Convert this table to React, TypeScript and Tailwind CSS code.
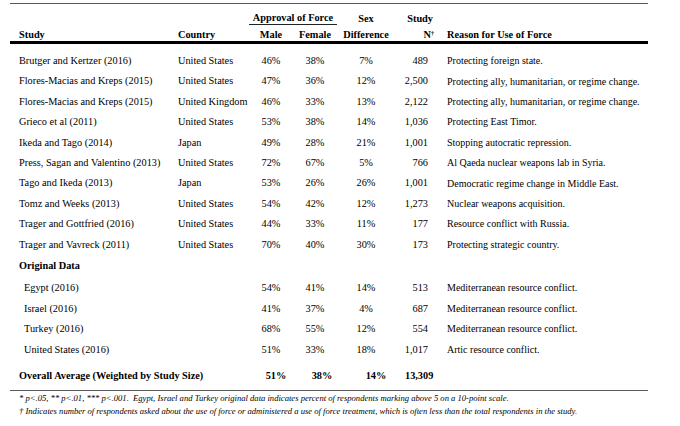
const ROWS = [
  ["Brutger and Kertzer (2016)", "United States", "46%", "38%", "7%", "489", "Protecting foreign state."],
  ["Flores-Macias and Kreps (2015)", "United States", "47%", "36%", "12%", "2,500", "Protecting ally, humanitarian, or regime change."],
  ["Flores-Macias and Kreps (2015)", "United Kingdom", "46%", "33%", "13%", "2,122", "Protecting ally, humanitarian, or regime change."],
  ["Grieco et al (2011)", "United States", "53%", "38%", "14%", "1,036", "Protecting East Timor."],
  ["Ikeda and Tago (2014)", "Japan", "49%", "28%", "21%", "1,001", "Stopping autocratic repression."],
  ["Press, Sagan and Valentino (2013)", "United States", "72%", "67%", "5%", "766", "Al Qaeda nuclear weapons lab in Syria."],
  ["Tago and Ikeda (2013)", "Japan", "53%", "26%", "26%", "1,001", "Democratic regime change in Middle East."],
  ["Tomz and Weeks (2013)", "United States", "54%", "42%", "12%", "1,273", "Nuclear weapons acquisition."],
  ["Trager and Gottfried (2016)", "United States", "44%", "33%", "11%", "177", "Resource conflict with Russia."],
  ["Trager and Vavreck (2011)", "United States", "70%", "40%", "30%", "173", "Protecting strategic country."],
];

const ORIGINAL = [
  ["Egypt (2016)", "54%", "41%", "14%", "513", "Mediterranean resource conflict."],
  ["Israel (2016)", "41%", "37%", "4%", "687", "Mediterranean resource conflict."],
  ["Turkey (2016)", "68%", "55%", "12%", "554", "Mediterranean resource conflict."],
  ["United States (2016)", "51%", "33%", "18%", "1,017", "Artic resource conflict."],
];

const GRID = "grid grid-cols-[168px_71px_44px_44px_58px_41px_212px]";

function DataRow({ cells, indent }: { cells: string[]; indent?: boolean }) {
  const [study, country, male, female, diff, n, reason] = cells;
  return (
    <div className={`${GRID} h-[20.4px] items-center leading-none`}>
      <div className={`${indent ? "pl-[14px]" : "pl-[9px]"} whitespace-nowrap`}>{study}</div>
      <div className="whitespace-nowrap">{country}</div>
      <div className="text-center">{male}</div>
      <div className="text-center">{female}</div>
      <div className="text-center">{diff}</div>
      <div className="pr-[8px] text-right">{n}</div>
      <div className="pl-[11px] text-[10px] whitespace-nowrap">{reason}</div>
    </div>
  );
}

export default function App() {
  return (
    <div className="h-[426px] w-[680px] bg-white text-black" style={{ fontFamily: "'Liberation Serif', 'Times New Roman', serif" }}>
      <div className="ml-[10px] w-[638px] pt-[3px] text-[10.3px]">
        <div className="h-px bg-[#5a5a5a]" />

        <div className={`${GRID} mt-[8px] h-[13px] items-end font-bold leading-[12px]`}>
          <div />
          <div />
          <div className="col-span-2 border-b border-[#222] text-center">Approval of Force</div>
          <div className="text-center">Sex</div>
          <div className="pr-[3px] text-right">Study</div>
          <div />
        </div>
        <div className={`${GRID} h-[16px] items-end font-bold leading-[13px]`}>
          <div className="pl-[9px]">Study</div>
          <div>Country</div>
          <div className="text-center">Male</div>
          <div className="text-center">Female</div>
          <div className="text-center">Difference</div>
          <div className="pr-[2px] text-right">
            N<sup className="text-[6px]">†</sup>
          </div>
          <div className="pl-[11px] whitespace-nowrap">Reason for Use of Force</div>
        </div>
        <div className="h-[3px] bg-black" />

        <div className="mt-[7px]">
          {ROWS.map((r, i) => (
            <DataRow key={i} cells={r} />
          ))}
        </div>

        <div className="flex h-[23.4px] items-center pl-[9px] font-bold leading-none">Original Data</div>
        {ORIGINAL.map((r, i) => (
          <DataRow key={i} cells={[r[0], "", ...r.slice(1)]} indent />
        ))}

        <div className={`${GRID} mt-[6.6px] h-[20px] items-center font-bold leading-none`}>
          <div className="col-span-2 pl-[9px] whitespace-nowrap">Overall Average (Weighted by Study Size)</div>
          <div className="pl-[10px] text-center">51%</div>
          <div className="pl-[14px] text-center">38%</div>
          <div className="pl-[20px] text-center">14%</div>
          <div className="pl-[10px] whitespace-nowrap">13,309</div>
          <div />
        </div>

        <div className="mt-[4px] h-px bg-[#5a5a5a]" />

        <div className="mt-[1px] pl-[9px] text-[8.6px] italic leading-[12.5px] whitespace-nowrap">
          <div>
            * p&lt;.05, ** p&lt;.01, *** p&lt;.001.&nbsp; Egypt, Israel and Turkey original data indicates percent of respondents marking above 5 on a 10-point scale.
          </div>
          <div>
            † Indicates number of respondents asked about the use of force or administered a use of force treatment, which is often less than the total respondents in the study.
          </div>
        </div>
      </div>
    </div>
  );
}
